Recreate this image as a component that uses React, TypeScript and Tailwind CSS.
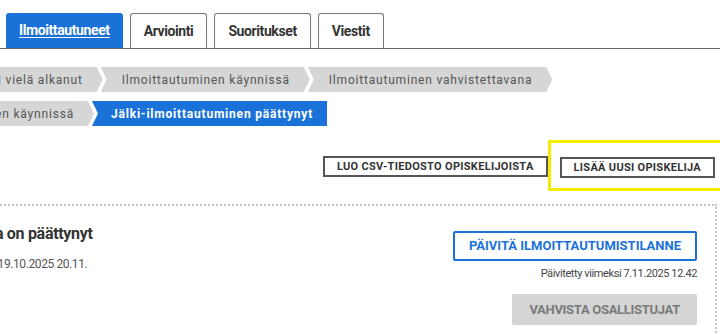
import React from "react";

const crumbBase =
  "h-[25px] flex items-center whitespace-nowrap text-[12px] tracking-[0.8px] -ml-[2px]";
const crumbGray =
  "bg-[#d6d6d6] text-[#555] pl-[21px] pr-[20px] [clip-path:polygon(0_0,calc(100%_-_6px)_0,100%_50%,calc(100%_-_6px)_100%,0_100%,6px_50%)]";
const crumbActive =
  "bg-[#1a72d8] text-white font-bold pl-[19px] pr-[14px] [clip-path:polygon(0_0,100%_0,100%_100%,0_100%,6px_50%)]";

const crumbs = [
  { label: "Ilmoittautumisaika ei vielä alkanut", active: false },
  { label: "Ilmoittautuminen käynnissä", active: false },
  { label: "Ilmoittautuminen vahvistettavana", active: false },
  { label: "Jälki-ilmoittautuminen käynnissä", active: false },
  { label: "Jälki-ilmoittautuminen päättynyt", active: true },
];

const tabs = ["Ilmoittautuneet", "Arviointi", "Suoritukset", "Viestit"];

export default function App() {
  return (
    <div className="w-[720px] h-[334px] overflow-hidden bg-white font-['Roboto',sans-serif] text-[#333]">
      {/* Tabs */}
      <div className="flex items-end gap-[7px] pl-[6px] pt-[13px] border-b border-[#666]">
        {tabs.map((t, i) =>
          i === 0 ? (
            <div
              key={t}
              className="h-[35px] px-[13px] flex items-center bg-[#1a72d8] rounded-t-[3px] text-white text-[14px] tracking-[-0.4px] font-bold underline underline-offset-2"
            >
              {t}
            </div>
          ) : (
            <div
              key={t}
              className="h-[35px] px-[13px] flex items-center bg-white border border-b-0 border-[#777] rounded-t-[3px] text-[#333] text-[14px] tracking-[-0.4px] font-bold"
            >
              {t}
            </div>
          )
        )}
      </div>

      {/* Breadcrumbs */}
      <div className="mt-[18px] flex flex-wrap gap-y-[9px] -ml-[146px] w-[866px]">
        {crumbs.map((c) => (
          <div key={c.label} className={`${crumbBase} ${c.active ? crumbActive : crumbGray}`}>
            {c.label}
          </div>
        ))}
      </div>

      {/* Action buttons */}
      <div className="mt-[28px] flex justify-end items-center gap-[12px] pr-[5px]">
        <button className="h-[21px] px-[12px] border-2 border-[#555] bg-white text-[#333] text-[11px] font-bold tracking-[0.3px] uppercase leading-none">
          Luo CSV-tiedosto opiskelijoista
        </button>
        <div className="relative">
          <div className="absolute -left-[12px] -top-[14px] w-[200px] h-[51px] border-[3px] border-[#f5ec00]" />
          <button className="relative h-[21px] px-[12px] border-2 border-[#555] bg-white text-[#333] text-[11px] font-bold tracking-[0.3px] uppercase leading-none">
            Lisää uusi opiskelija
          </button>
        </div>
      </div>

      {/* Card */}
      <div className="mt-[26px] mr-[3px] -ml-[187px] border-2 border-dotted border-[#c4c4c4] h-[200px] flex justify-between pr-[18px] pl-[20px]">
        <div className="pt-[17px]">
          <h2 className="text-[16px] font-bold tracking-[-0.3px] text-[#333] leading-[22px]">
            Jälki-ilmoittautumisaika on päättynyt
          </h2>
          <p className="mt-[10px] text-[12px] tracking-[-0.4px] leading-[19px] text-[#555]">
            Päättymisaika: ilmoittautuminen 19.10.2025 20.11.
          </p>
        </div>
        <div className="pt-[25px] flex flex-col items-end">
          <button className="h-[30px] px-[14px] border-2 border-[#1a72d8] rounded-[2px] bg-white text-[#1a72d8] text-[13px] font-bold tracking-[0px]">
            PÄIVITÄ ILMOITTAUTUMISTILANNE
          </button>
          <div className="mt-[5px] text-[11px] leading-[16px] tracking-[-0.4px] text-[#444]">
            Päivitetty viimeksi 7.11.2025 12.42
          </div>
          <button className="mt-[12px] h-[31px] px-[17px] rounded-[2px] bg-[#d5d5d5] text-[#7a7a7a] text-[13px] font-bold tracking-[-0.3px]">
            VAHVISTA OSALLISTUJAT
          </button>
        </div>
      </div>
    </div>
  );
}
